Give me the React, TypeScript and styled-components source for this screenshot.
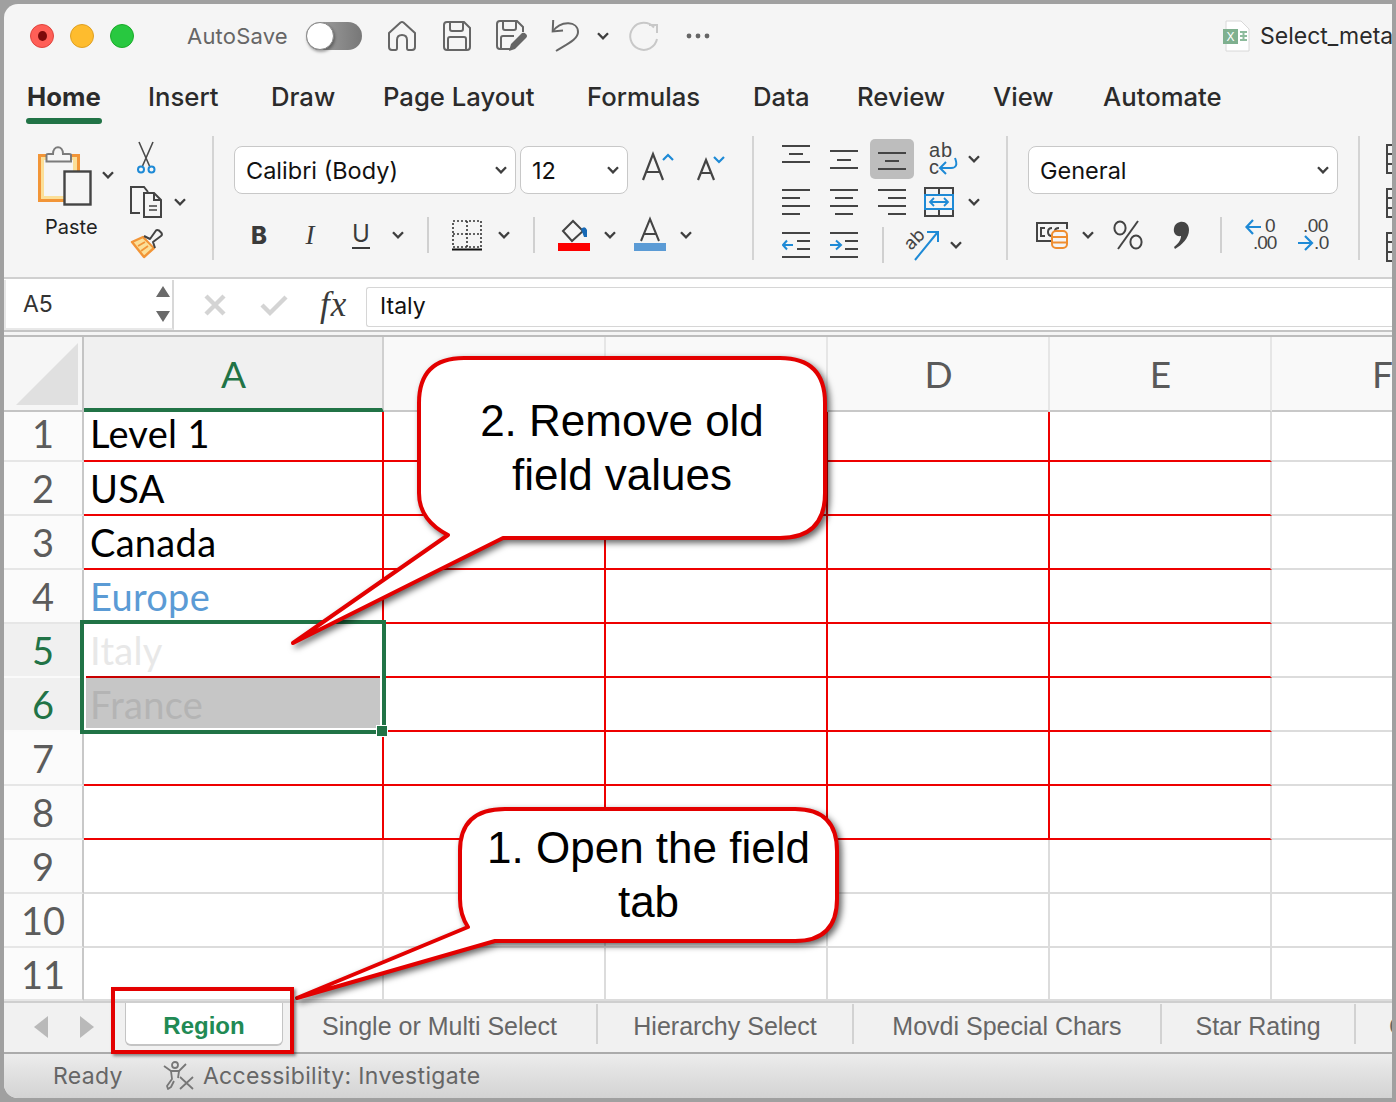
import * as React from 'react';
import styled, { createGlobalStyle } from 'styled-components';

const GREEN = '#217346';
const UI = '"Inter", "Liberation Sans", sans-serif';
const CELL = '"Lato", "Open Sans", sans-serif';

const Global = createGlobalStyle`
  html, body { margin: 0; padding: 0; background: #a0a0a0; }
  * { box-sizing: border-box; }
`;

const S = {
  Page: styled.div`
    position: relative;
    width: 1396px;
    height: 1102px;
    padding: 4px;
    background: #a0a0a0;
    overflow: hidden;
    font-family: ${UI};
  `,
  Win: styled.div`
    width: 1388px;
    height: 1094px;
    background: #f5f5f5;
    border-radius: 14px 0 0 14px;
    overflow: hidden;
    display: flex;
    flex-direction: column;
  `,
  TitleBar: styled.div`
    height: 66px;
    flex: none;
    display: flex;
    align-items: center;
    padding: 0 0 2px 26px;
  `,
  Light: styled.span<{ $c: string; $b: string }>`
    flex: none;
    width: 24px;
    height: 24px;
    margin-right: 16px;
    border-radius: 50%;
    background: ${p => p.$c};
    border: 1px solid ${p => p.$b};
    display: flex;
    align-items: center;
    justify-content: center;
  `,
  LightDot: styled.span`
    width: 9px;
    height: 10px;
    border-radius: 50%;
    background: #7d0a0a;
  `,
  AutoSave: styled.span`
    flex: none;
    margin-left: 37px;
    width: 119px;
    font-size: 22px;
    letter-spacing: 0.2px;
    color: #666;
  `,
  Toggle: styled.span`
    position: relative;
    width: 56px;
    height: 28px;
    border-radius: 14px;
    background: linear-gradient(90deg, #a9a9a9, #777);
    flex: none;
  `,
  Knob: styled.span`
    position: absolute;
    left: 0;
    top: 0;
    width: 28px;
    height: 28px;
    border-radius: 50%;
    background: #fff;
    border: 1px solid #888;
    box-shadow: 1px 2px 3px rgba(0, 0, 0, 0.35);
  `,
  Tool: styled.span<{ $ml?: number; $w: number; $h?: number }>`
    flex: none;
    display: flex;
    align-items: center;
    justify-content: center;
    margin-left: ${p => p.$ml ?? 0}px;
    width: ${p => p.$w}px;
    height: ${p => (p.$h ? `${p.$h}px` : 'auto')};
    svg { display: block; overflow: visible; }
  `,
  DocName: styled.span`
    flex: none;
    margin-left: 10px;
    font-size: 23px;
    color: #2a2a2a;
    white-space: nowrap;
  `,
  TabRow: styled.div`
    height: 55px;
    flex: none;
    display: flex;
    padding-left: 23px;
  `,
  RibbonTab: styled.div<{ $w: number; $on?: boolean }>`
    position: relative;
    flex: none;
    width: ${p => p.$w}px;
    height: 54px;
    line-height: 54px;
    font-size: 25.7px;
    font-weight: ${p => (p.$on ? 700 : 500)};
    color: #2b2b2b;
    white-space: nowrap;
    ${p =>
      p.$on
        ? `&::after {
        content: '';
        position: absolute;
        left: -1px;
        bottom: 0;
        width: 76px;
        height: 6px;
        border-radius: 3px;
        background: ${GREEN};
      }`
        : ''}
  `,
  Ribbon: styled.div`
    height: 154px;
    flex: none;
    display: flex;
    align-items: flex-start;
    padding-top: 11px;
    border-bottom: 2px solid #d0d0d0;
  `,
  Group: styled.div<{ $w: number }>`
    flex: none;
    width: ${p => p.$w}px;
    height: 124px;
    border-right: 2px solid #d4d4d4;
    display: flex;
  `,
  PasteCol: styled.div`
    width: 64px;
    margin-left: 34px;
    padding-top: 10px;
    display: flex;
    flex-direction: column;
  `,
  PasteLabel: styled.span`
    margin: 8px 0 0 7px;
    font-size: 20px;
    line-height: 26px;
    color: #222;
  `,
  ChevronCol: styled.div`
    padding-top: 27px;
  `,
  MiniCol: styled.div`
    margin-left: 16px;
    padding-top: 5px;
    display: flex;
    flex-direction: column;
  `,
  MiniRow: styled.div<{ $h: number }>`
    flex: none;
    height: ${p => p.$h}px;
    display: flex;
    align-items: center;
  `,
  GroupBody: styled.div<{ $pl: number }>`
    padding: 1px 0 0 ${p => p.$pl}px;
    display: flex;
    flex-direction: column;
  `,
  Row: styled.div<{ $h: number }>`
    flex: none;
    height: ${p => p.$h}px;
    display: flex;
    align-items: center;
  `,
  Select: styled.div<{ $w: number; $ml?: number }>`
    flex: none;
    width: ${p => p.$w}px;
    height: 48px;
    margin-left: ${p => p.$ml ?? 0}px;
    padding: 0 8px 0 11px;
    background: #fff;
    border: 1.5px solid #c8c8c8;
    border-radius: 8px;
    display: flex;
    align-items: center;
    justify-content: space-between;
    font-size: 23.5px;
    color: #111;
  `,
  Bold: styled.span<{ $ml?: number; $w: number }>`
    flex: none;
    width: ${p => p.$w}px;
    margin-left: ${p => p.$ml ?? 0}px;
    font-size: 24px;
    font-weight: 800;
    color: #3a3a3a;
    text-align: center;
  `,
  Ital: styled.span<{ $ml: number; $w: number }>`
    flex: none;
    width: ${p => p.$w}px;
    margin-left: ${p => p.$ml}px;
    font-family: "Liberation Serif", serif;
    font-size: 27px;
    font-style: italic;
    color: #3a3a3a;
    text-align: center;
  `,
  Under: styled.span<{ $ml: number; $w: number }>`
    flex: none;
    width: ${p => p.$w}px;
    margin-left: ${p => p.$ml}px;
    font-size: 24px;
    line-height: 26px;
    color: #3a3a3a;
    text-align: center;
    border-bottom: 2px solid #3a3a3a;
  `,
  VSep: styled.span<{ $ml: number; $h: number }>`
    flex: none;
    width: 2px;
    height: ${p => p.$h}px;
    margin-left: ${p => p.$ml}px;
    background: #d0d0d0;
  `,
  Highlight: styled.span`
    flex: none;
    width: 44px;
    height: 40px;
    margin-left: 12px;
    border-radius: 5px;
    background: #bdbdbd;
    display: flex;
    align-items: center;
    justify-content: center;
  `,
  Formula: styled.div`
    height: 53px;
    flex: none;
    display: flex;
    align-items: center;
    background: #fff;
    border-bottom: 2px solid #c4c4c4;
  `,
  NameBox: styled.div`
    flex: none;
    width: 170px;
    height: 50px;
    padding: 0 2px 0 17px;
    background: #fff;
    border: 2px solid #e8e8e8;
    border-top: none;
    border-right: 2px solid #d8d8d8;
    display: flex;
    align-items: center;
    justify-content: space-between;
    font-size: 23px;
    color: #333;
  `,
  Fx: styled.span`
    flex: none;
    margin-left: 32px;
    width: 30px;
    font-family: "Liberation Serif", serif;
    font-style: italic;
    font-size: 35px;
    line-height: 40px;
    letter-spacing: 1px;
    color: #3a3a3a;
  `,
  FormulaInput: styled.div`
    flex: 1;
    height: 40px;
    margin: 4px 0 0 16px;
    padding-left: 13px;
    background: #fff;
    border: 1.5px solid #d6d6d6;
    border-radius: 3px 0 0 3px;
    border-right: none;
    font-size: 23px;
    line-height: 37px;
    color: #111;
  `,
  Grid: styled.div`
    flex: none;
    margin-top: 3px;
    display: grid;
    grid-template-columns: 80px 300px 222px 222px 222px 222px 222px;
    grid-template-rows: 75px 50px repeat(9, 54px) 53px;
    background: #fff;
    border-top: 2px solid #bdbdbd;
  `,
  Corner: styled.div`
    background: #f6f6f6;
    border-right: 2px solid #c4c4c4;
    border-bottom: 2px solid #c4c4c4;
    padding: 6px 4px 4px 12px;
    svg { display: block; }
  `,
  ColHead: styled.div<{ $on?: boolean }>`
    font-family: ${CELL};
    font-size: 37px;
    line-height: 74px;
    padding-left: 1px;
    text-align: center;
    overflow: hidden;
    white-space: nowrap;
    color: ${p => (p.$on ? GREEN : '#5a5a5a')};
    background: ${p => (p.$on ? '#f0f0f0' : '#f9f9f9')};
    border-right: 2px solid ${p => (p.$on ? '#d0d0d0' : '#e6e6e6')};
    border-bottom: ${p => (p.$on ? `4px solid ${GREEN}` : '2px solid #c8c8c8')};
  `,
  RowHead: styled.div<{ $on?: boolean; $first?: boolean }>`
    font-family: ${CELL};
    font-size: 38px;
    text-align: center;
    padding-bottom: ${p => (p.$first ? 7 : 0)}px;
    display: flex;
    align-items: center;
    justify-content: center;
    color: ${p => (p.$on ? GREEN : '#5c5c5c')};
    background: ${p => (p.$on ? '#f0f0f0' : '#fbfbfb')};
    border-right: 2px solid #c8c8c8;
    border-bottom: 2px solid ${p => (p.$on ? '#fafafa' : '#e6e6e6')};
  `,
  Cell: styled.div<{ $line: string; $bottom: string; $bg?: string; $c?: string; $first?: boolean }>`
    font-family: ${CELL};
    font-size: 38px;
    letter-spacing: 0.3px;
    padding: 0 0 ${p => (p.$first ? 7 : 0)}px 6px;
    display: flex;
    align-items: center;
    overflow: hidden;
    white-space: nowrap;
    color: ${p => p.$c ?? '#000'};
    background: ${p => p.$bg ?? '#fff'};
    border-right: 2px solid ${p => p.$line};
    border-bottom: 2px solid ${p => p.$bottom};
  `,
  SheetTabs: styled.div`
    height: 51px;
    flex: none;
    display: flex;
    background: #f1f1f1;
    border-top: 2px solid #cfcfcf;
    font-family: "Liberation Sans", Arial, sans-serif;
  `,
  NavArrow: styled.span<{ $ml: number; $dir: 'l' | 'r' }>`
    flex: none;
    width: 0;
    height: 0;
    margin: 13px 0 0 ${p => p.$ml}px;
    border-top: 11px solid transparent;
    border-bottom: 11px solid transparent;
    ${p => (p.$dir === 'l' ? 'border-right: 14px solid #b9b9b9;' : 'border-left: 14px solid #b9b9b9;')}
  `,
  ActiveTab: styled.div`
    flex: none;
    width: 158px;
    height: 43px;
    margin-left: 31px;
    background: #fff;
    border: 1px solid #c4c4c4;
    border-top: none;
    border-bottom-width: 2px;
    border-radius: 0 0 6px 6px;
    font-size: 24px;
    font-weight: 700;
    line-height: 46px;
    text-align: center;
    color: #218a54;
  `,
  SheetTab: styled.div<{ $w: number }>`
    flex: none;
    width: ${p => p.$w}px;
    height: 40px;
    margin-top: 1px;
    border-right: 2px solid #d2d2d2;
    font-size: 25px;
    line-height: 44px;
    text-align: center;
    white-space: nowrap;
    overflow: hidden;
    color: #666;
  `,
  ClippedTab: styled.div`
    flex: none;
    padding-left: 33px;
    margin-top: 1px;
    font-size: 25px;
    line-height: 44px;
    white-space: nowrap;
    color: #666;
  `,
  Status: styled.div`
    flex: 1;
    display: flex;
    align-items: center;
    padding-left: 49px;
    background: linear-gradient(180deg, #ececec, #d3d3d3);
    border-top: 2px solid #ababab;
    font-size: 23px;
    color: #666;
  `,
  StatusText: styled.span<{ $ml?: number }>`
    margin-left: ${p => p.$ml ?? 0}px;
    letter-spacing: 0.35px;
  `,
  Selection: styled.div`
    position: absolute;
    left: 80px;
    top: 620px;
    width: 306px;
    height: 114px;
    border: 4px solid ${GREEN};
    box-shadow: inset 0 0 0 2px #fff;
    pointer-events: none;
  `,
  Handle: styled.span`
    position: absolute;
    right: -6px;
    bottom: -7px;
    width: 12px;
    height: 12px;
    background: ${GREEN};
    border: 1.5px solid #fff;
  `,
  CalloutBox: styled.div<{ $l: number; $t: number; $w: number; $h: number }>`
    position: absolute;
    left: ${p => p.$l}px;
    top: ${p => p.$t}px;
    width: ${p => p.$w}px;
    height: ${p => p.$h}px;
    svg {
      display: block;
      overflow: visible;
      filter: drop-shadow(3px 3px 3px rgba(0, 0, 0, 0.6));
    }
  `,
  CalloutText: styled.div<{ $l: number; $t: number; $w: number }>`
    position: absolute;
    left: ${p => p.$l}px;
    top: ${p => p.$t}px;
    width: ${p => p.$w}px;
    font-family: "Liberation Sans", Arial, sans-serif;
    font-size: 44px;
    line-height: 54px;
    text-align: center;
    color: #000;
  `,
  RedBox: styled.div`
    position: absolute;
    left: 111px;
    top: 987px;
    width: 183px;
    height: 67px;
    border: 4px solid #e30000;
    box-shadow: 2px 2px 3px rgba(0, 0, 0, 0.45);
    pointer-events: none;
  `
};

const DARK = '#444';
const BLUE = '#1e8ad6';

const Chevron: React.FC<{ c?: string }> = ({ c = '#3f3f3f' }) => (
  <svg width="12" height="8" viewBox="0 0 12 8" fill="none">
    <path d="M1 1.2 L6 6.4 L11 1.2" stroke={c} strokeWidth="2.3" />
  </svg>
);

const Home = () => (
  <svg width="28" height="30" viewBox="0 0 28 30" fill="none" stroke="#666" strokeWidth="2" strokeLinejoin="round">
    <path d="M1 12 L12.5 1.5 Q14 0.5 15.5 1.5 L27 12 V26 Q27 29 24 29 H20.5 Q19 29 19 27 V19 Q19 14 14 14 Q9 14 9 19 V27 Q9 29 7.5 29 H4 Q1 29 1 26 Z" />
  </svg>
);

const Save = () => (
  <svg width="28" height="30" viewBox="0 0 28 30" fill="none" stroke="#666" strokeWidth="2">
    <path d="M4 1 H21 L27 7 V26 Q27 29 24 29 H4 Q1 29 1 26 V4 Q1 1 4 1 Z" />
    <path d="M7 1 V8 Q7 10 9 10 H18 Q20 10 20 8 V1" />
    <path d="M5 29 V18 Q5 16 7 16 H21 Q23 16 23 18 V29" />
  </svg>
);

const SaveEdit = () => (
  <svg width="32" height="32" viewBox="0 0 32 32" fill="none" stroke="#666" strokeWidth="2">
    <path d="M14 29 H4 Q1 29 1 26 V4 Q1 1 4 1 H21 L27 7 V12" />
    <path d="M7 1 V8 Q7 10 9 10 H18 Q20 10 20 8 V1" />
    <path d="M5 29 V18 Q5 16 7 16 H18" />
    <path d="M13 31 L15 24 L26 13 Q28 12 30 14 Q32 16 30 18 L19 29 Z" fill="#666" stroke="none" />
  </svg>
);

const Undo = () => (
  <svg width="28" height="34" viewBox="0 0 28 34" fill="none" stroke="#666" strokeWidth="2">
    <path d="M2.2 1 L1.7 12.5 L12 11.5" />
    <path d="M1.7 12.5 C10 1 27 2 27 13 C27 20 18 24 5 32" />
  </svg>
);

const Redo = () => (
  <svg width="28" height="30" viewBox="0 0 28 30" fill="none" stroke="#c8c8c8" strokeWidth="2">
    <path d="M24 6.5 A13.5 13.5 0 1 0 27 18" />
    <path d="M19 4 H27 V12" />
  </svg>
);

const Dots = () => (
  <svg width="24" height="6" viewBox="0 0 24 6" fill="#666">
    <circle cx="3" cy="3" r="2.4" />
    <circle cx="12" cy="3" r="2.4" />
    <circle cx="21" cy="3" r="2.4" />
  </svg>
);

const ExcelDoc = () => (
  <svg width="27" height="32" viewBox="0 0 27 32">
    <path d="M3 1 H18 L26 9 V31 H3 Z" fill="#fff" stroke="#d8d8d8" />
    <rect x="0" y="9" width="15" height="15" fill="#7fb08f" />
    <text x="3.5" y="21" fontSize="12" fill="#fff" fontFamily="Liberation Sans">X</text>
    <path d="M17 12 H24 M17 16 H24 M17 20 H24 M20.5 11 V21" stroke="#8dbb9c" strokeWidth="2" />
  </svg>
);

const PasteIcon = () => (
  <svg width="54" height="60" viewBox="0 0 54 60" fill="none">
    <rect x="1.5" y="9.5" width="39" height="45" fill="#fbdf98" stroke="#f29537" strokeWidth="3" />
    <rect x="6" y="14" width="29" height="36" fill="#f5f5f5" />
    <path d="M8.5 15.5 V9 Q8.5 8 10 8 H15 C15 -1 25 -1 25 8 H31 Q33 8 33 9 V15.5 Z" fill="#f5f5f5" stroke="#7b7b7b" strokeWidth="2" />
    <rect x="26.5" y="25.5" width="26" height="33" fill="#f5f5f5" stroke="#444" strokeWidth="2.4" />
  </svg>
);

const Cut = () => (
  <svg width="20" height="32" viewBox="0 0 20 32" fill="none">
    <path d="M3 0 L13.5 24 M17 0 L6.5 24" stroke="#4a4a4a" strokeWidth="1.6" />
    <circle cx="5" cy="27.5" r="3" stroke={BLUE} strokeWidth="2" />
    <circle cx="15.5" cy="27.5" r="3" stroke={BLUE} strokeWidth="2" />
  </svg>
);

const Copy = () => (
  <svg width="32" height="32" viewBox="0 0 32 32" fill="none" stroke={DARK} strokeWidth="2">
    <path d="M10 27 H1 V1 H14 L18 6" />
    <path d="M14 7 H24 L31 14 V31 H14 Z" fill="#f5f5f5" />
    <path d="M24 7 V14 H31" />
    <path d="M19 20 H27 M19 24 H27" strokeWidth="1.6" />
  </svg>
);

const Brush = () => (
  <svg width="32" height="30" viewBox="0 0 32 30" fill="none">
    <path d="M1 13 L12 8 L23 19 L13 28 Z" fill="#fbdf98" stroke="#f29537" strokeWidth="2.4" strokeLinejoin="round" />
    <path d="M7 17 L14 13 M10 22 L17 17" stroke="#f29537" strokeWidth="1.8" />
    <path d="M13 7 L19 10 L25 1.5 Q26 0.5 28 1.5 L30.5 4 Q31.5 6 30 7 L22 13 L24 19" stroke={DARK} strokeWidth="2" fill="#f5f5f5" strokeLinejoin="round" />
  </svg>
);

const GrowFont = () => (
  <svg width="32" height="30" viewBox="0 0 32 30" fill="none">
    <path d="M1 25 L11 -1 L21 25 M4.5 17 H17.5" stroke={DARK} strokeWidth="2.2" />
    <path d="M21 5 L26 0 L31 5" stroke={BLUE} strokeWidth="2.2" />
  </svg>
);

const ShrinkFont = () => (
  <svg width="28" height="30" viewBox="0 0 28 30" fill="none">
    <path d="M1 25 L9 5 L17 25 M4 18 H14" stroke={DARK} strokeWidth="2.2" />
    <path d="M17 2 L22 7 L27 2" stroke={BLUE} strokeWidth="2.2" />
  </svg>
);

const Borders = () => (
  <svg width="30" height="31" viewBox="0 0 30 31" fill="none">
    <path d="M1 1 H29 V27 H1 Z M15 1 V27 M1 14 H29" stroke="#333" strokeWidth="1.6" strokeDasharray="2 2" />
    <path d="M0 29.5 H30" stroke="#111" strokeWidth="2" />
  </svg>
);

const FillColor = () => (
  <svg width="32" height="32" viewBox="0 0 32 32" fill="none">
    <path d="M5 12 L15 2 L25 12 L14 22 Z" stroke={DARK} strokeWidth="2" fill="#f5f5f5" />
    <path d="M23 10 Q27 6 29 11 V18 H26 Z" fill="#1769b5" />
    <rect x="0" y="24" width="32" height="8" fill="#fd0000" />
  </svg>
);

const FontColor = () => (
  <svg width="32" height="32" viewBox="0 0 32 32" fill="none">
    <path d="M7 22 L16 0 L25 22 M10 15 H22" stroke={DARK} strokeWidth="2" />
    <rect x="0" y="24" width="32" height="8" fill="#5b9bd5" />
  </svg>
);

const Lines: React.FC<{ rows: [number, number, number][] }> = ({ rows }) => (
  <svg width="28" height="30" viewBox="0 0 28 30" fill="none" stroke={DARK} strokeWidth="2">
    {rows.map((r, i) => (
      <path key={i} d={`M${r[0]} ${r[2]} H${r[1]}`} />
    ))}
  </svg>
);

const WrapText = () => (
  <svg width="30" height="34" viewBox="0 0 30 34" fill="none">
    <text x="0" y="15" fontSize="20" letterSpacing="1" fill={DARK} fontFamily="Liberation Sans">ab</text>
    <text x="0" y="32" fontSize="20" fill={DARK} fontFamily="Liberation Sans">c</text>
    <path d="M26 16 Q30 26 22 26 H12 M17 20 L11 26 L17 32" stroke={BLUE} strokeWidth="2" />
  </svg>
);

const Merge = () => (
  <svg width="30" height="30" viewBox="0 0 30 30" fill="none">
    <path d="M1 1 H29 V29 H1 Z M15 1 V8 M15 22 V29" stroke={DARK} strokeWidth="2" />
    <rect x="1" y="8" width="28" height="14" stroke={BLUE} strokeWidth="2" fill="#f5f5f5" />
    <path d="M6 15 H24 M10 11 L6 15 L10 19 M20 11 L24 15 L20 19" stroke={BLUE} strokeWidth="1.8" />
  </svg>
);

const Indent: React.FC<{ out?: boolean }> = ({ out }) => (
  <svg width="28" height="26" viewBox="0 0 28 26" fill="none">
    <path d="M0 1 H28 M0 25 H28 M15 9 H28 M15 17 H28" stroke={DARK} strokeWidth="2" />
    {out ? (
      <path d="M11 13 H1 M5 8.5 L1 13 L5 17.5" stroke={BLUE} strokeWidth="2" />
    ) : (
      <path d="M0 13 H10 M6 8.5 L11 13 L6 17.5" stroke={BLUE} strokeWidth="2" />
    )}
  </svg>
);

const Orient = () => (
  <svg width="34" height="32" viewBox="0 0 34 32" fill="none">
    <text x="0" y="0" fontSize="18" fill={DARK} fontFamily="Inter" transform="translate(6 22) rotate(-45)">ab</text>
    <path d="M10 31 L32 4 M22 3 H33 V13" stroke={BLUE} strokeWidth="2" />
  </svg>
);

const CondFormat = () => (
  <svg width="32" height="30" viewBox="0 0 32 30" fill="none">
    <path d="M16 21 H1 V3 H31 V9" stroke={DARK} strokeWidth="2" />
    <path d="M9 8 H5 V16 H9 M16 8 Q12 8 12 12 Q12 16 16 16 M23 8 Q19 8 19 11" stroke={DARK} strokeWidth="2" />
    <rect x="16" y="11" width="15" height="17" rx="4" fill="#f5f5f5" stroke="#ef8d2f" strokeWidth="2" />
    <path d="M16 17 H31 M16 22.5 H31" stroke="#ef8d2f" strokeWidth="2" />
  </svg>
);

const Percent = () => (
  <svg width="30" height="30" viewBox="0 0 30 30" fill="none" stroke={DARK} strokeWidth="2">
    <ellipse cx="7" cy="8" rx="5.6" ry="6.5" />
    <ellipse cx="23" cy="22" rx="5.6" ry="6.5" />
    <path d="M5 29 L25 1" />
  </svg>
);

const Comma = () => (
  <svg width="16" height="28" viewBox="0 0 16 28" fill={DARK}>
    <path d="M7 1 C12 0 16 3 16 9 C16 17 9 24 2 28 L1 26 C5 23 8 19 8 15 C3 16 0 12 1 7 C1.5 4 4 1.5 7 1 Z" />
  </svg>
);

const DecInc = () => (
  <svg width="32" height="36" viewBox="0 0 32 36" fill="none">
    <path d="M16 10 H2 M8 3 L1.5 10 L8 17" stroke={BLUE} strokeWidth="2.2" />
    <text x="20" y="15" fontSize="19" fill={DARK} fontFamily="Liberation Sans">0</text>
    <text x="8" y="32" fontSize="19" letterSpacing="-1" fill={DARK} fontFamily="Liberation Sans">.00</text>
  </svg>
);

const DecDec = () => (
  <svg width="32" height="36" viewBox="0 0 32 36" fill="none">
    <text x="6" y="15" fontSize="19" letterSpacing="-0.5" fill={DARK} fontFamily="Liberation Sans">.00</text>
    <path d="M1 26 H15 M8 19 L15 26 L8 33" stroke={BLUE} strokeWidth="2.2" />
    <text x="17" y="32" fontSize="19" letterSpacing="-0.5" fill={DARK} fontFamily="Liberation Sans">.0</text>
  </svg>
);

const PartialCell = () => (
  <svg width="10" height="30" viewBox="0 0 10 30" fill="none" stroke={DARK} strokeWidth="2">
    <path d="M10 1 H1 V29 H10 M1 10 H10 M1 20 H10" />
  </svg>
);

const Stepper = () => (
  <svg width="14" height="36" viewBox="0 0 14 36" fill="#6a6a6a">
    <path d="M7 0 L14 11 H0 Z M0 25 H14 L7 36 Z" />
  </svg>
);

const Cross = () => (
  <svg width="22" height="22" viewBox="0 0 22 22" fill="none" stroke="#d4d4d4" strokeWidth="4.4">
    <path d="M2 2 L20 20 M20 2 L2 20" />
  </svg>
);

const Check = () => (
  <svg width="28" height="22" viewBox="0 0 28 22" fill="none" stroke="#d4d4d4" strokeWidth="4.4">
    <path d="M2 11 L10 19 L26 3" />
  </svg>
);

const Person = () => (
  <svg width="32" height="32" viewBox="0 0 32 32" fill="none" stroke="#777" strokeWidth="1.8" strokeLinejoin="round">
    <circle cx="12" cy="5" r="3" />
    <path d="M1 6 L8 11 H16 L23 4" />
    <path d="M8 11 L9 19 L4 26 L5 29 L8 27 L11 21 M16 11 L15 18" />
    <path d="M17 17 L30 29 M30 17 L17 29" />
  </svg>
);

const tabs: [string, number, boolean?][] = [
  ['Home', 121, true],
  ['Insert', 123],
  ['Draw', 112],
  ['Page Layout', 204],
  ['Formulas', 166],
  ['Data', 104],
  ['Review', 136],
  ['View', 110],
  ['Automate', 140]
];

const COLS = ['A', 'B', 'C', 'D', 'E', 'F'];

const cellText: Record<number, string> = {
  1: 'Level 1',
  2: 'USA',
  3: 'Canada',
  4: 'Europe',
  5: 'Italy',
  6: 'France'
};

const RED = '#ee0000';
const GRAY = '#dcdcdc';

const cellColor = (row: number) => {
  if (row === 4) return '#5b9bd5';
  if (row === 5) return '#e8e8e8';
  if (row === 6) return '#b4b4b4';
  return '#000';
};

const bottomLine = (row: number, c: number) => {
  if (row === 5 && c === 0) return '#c80000';
  return row <= 8 && c < 5 ? RED : GRAY;
};

const SheetCells = () => (
  <>
    {Array.from({ length: 11 }, (_, i) => i + 1).map(row => (
      <React.Fragment key={row}>
        <S.RowHead $on={row === 5 || row === 6} $first={row === 1}>{row}</S.RowHead>
        {COLS.map((col, c) => (
          <S.Cell
            key={col}
            $first={row === 1}
            $line={row <= 8 && c < 4 ? RED : GRAY}
            $bottom={bottomLine(row, c)}
            $bg={row === 6 && c === 0 ? '#c6c6c6' : undefined}
            $c={cellColor(row)}
          >
            {c === 0 ? cellText[row] : ''}
          </S.Cell>
        ))}
      </React.Fragment>
    ))}
  </>
);

const App: React.FC = () => {
  return (
    <S.Page>
      <Global />
      <S.Win>
        <S.TitleBar>
          <S.Light $c="#ff5f57" $b="#e0443e">
            <S.LightDot />
          </S.Light>
          <S.Light $c="#febc2e" $b="#dfa023" />
          <S.Light $c="#28c840" $b="#1aab29" />
          <S.AutoSave>AutoSave</S.AutoSave>
          <S.Toggle>
            <S.Knob />
          </S.Toggle>
          <S.Tool $ml={26} $w={28}><Home /></S.Tool>
          <S.Tool $ml={27} $w={28}><Save /></S.Tool>
          <S.Tool $ml={25} $w={32}><SaveEdit /></S.Tool>
          <S.Tool $ml={23} $w={28}><Undo /></S.Tool>
          <S.Tool $ml={17} $w={14}><Chevron /></S.Tool>
          <S.Tool $ml={20} $w={28}><Redo /></S.Tool>
          <S.Tool $ml={28} $w={24}><Dots /></S.Tool>
          <S.Tool $ml={513} $w={27}><ExcelDoc /></S.Tool>
          <S.DocName>Select_metadata</S.DocName>
        </S.TitleBar>

        <S.TabRow>
          {tabs.map(([name, w, on]) => (
            <S.RibbonTab key={name} $w={w} $on={on}>{name}</S.RibbonTab>
          ))}
        </S.TabRow>

        <S.Ribbon>
          <S.Group $w={210}>
            <S.PasteCol>
              <PasteIcon />
              <S.PasteLabel>Paste</S.PasteLabel>
            </S.PasteCol>
            <S.ChevronCol><Chevron /></S.ChevronCol>
            <S.MiniCol>
              <S.MiniRow $h={34}>
                <S.Tool $ml={6} $w={20}><Cut /></S.Tool>
              </S.MiniRow>
              <S.MiniRow $h={54}>
                <S.Tool $w={32}><Copy /></S.Tool>
                <S.Tool $ml={12} $w={12}><Chevron /></S.Tool>
              </S.MiniRow>
              <S.MiniRow $h={30}>
                <S.Tool $ml={1} $w={32}><Brush /></S.Tool>
              </S.MiniRow>
            </S.MiniCol>
          </S.Group>

          <S.Group $w={540}>
            <S.GroupBody $pl={20}>
              <S.Row $h={66}>
                <S.Select $w={282}>Calibri (Body)<Chevron /></S.Select>
                <S.Select $w={108} $ml={4}>12<Chevron /></S.Select>
                <S.Tool $ml={14} $w={32}><GrowFont /></S.Tool>
                <S.Tool $ml={23} $w={28}><ShrinkFont /></S.Tool>
              </S.Row>
              <S.Row $h={64}>
                <S.Bold $ml={17} $w={15}>B</S.Bold>
                <S.Ital $ml={37} $w={14}>I</S.Ital>
                <S.Under $ml={35} $w={18}>U</S.Under>
                <S.Tool $ml={22} $w={12}><Chevron /></S.Tool>
                <S.VSep $ml={23} $h={36} />
                <S.Tool $ml={23} $w={30}><Borders /></S.Tool>
                <S.Tool $ml={16} $w={12}><Chevron /></S.Tool>
                <S.VSep $ml={23} $h={36} />
                <S.Tool $ml={23} $w={32}><FillColor /></S.Tool>
                <S.Tool $ml={14} $w={12}><Chevron /></S.Tool>
                <S.Tool $ml={18} $w={32}><FontColor /></S.Tool>
                <S.Tool $ml={14} $w={12}><Chevron /></S.Tool>
              </S.Row>
            </S.GroupBody>
          </S.Group>

          <S.Group $w={254}>
            <S.GroupBody $pl={28}>
              <S.Row $h={43}>
                <Lines rows={[[0, 28, 2], [7, 21, 10], [0, 28, 18]]} />
                <S.Tool $ml={20} $w={28}><Lines rows={[[0, 28, 7], [7, 21, 16], [0, 28, 24]]} /></S.Tool>
                <S.Highlight><Lines rows={[[0, 28, 9], [7, 21, 17], [0, 28, 25]]} /></S.Highlight>
                <S.Tool $ml={15} $w={30}><WrapText /></S.Tool>
                <S.Tool $ml={9} $w={12}><Chevron /></S.Tool>
              </S.Row>
              <S.Row $h={44}>
                <Lines rows={[[0, 28, 3], [0, 18, 11], [0, 28, 19], [0, 18, 27]]} />
                <S.Tool $ml={20} $w={28}><Lines rows={[[0, 28, 3], [5, 23, 11], [0, 28, 19], [5, 23, 27]]} /></S.Tool>
                <S.Tool $ml={20} $w={28}><Lines rows={[[0, 28, 3], [10, 28, 11], [0, 28, 19], [10, 28, 27]]} /></S.Tool>
                <S.Tool $ml={18} $w={30}><Merge /></S.Tool>
                <S.Tool $ml={14} $w={12}><Chevron /></S.Tool>
              </S.Row>
              <S.Row $h={42}>
                <Indent out />
                <S.Tool $ml={20} $w={28}><Indent /></S.Tool>
                <S.VSep $ml={24} $h={36} />
                <S.Tool $ml={21} $w={34}><Orient /></S.Tool>
                <S.Tool $ml={11} $w={12}><Chevron /></S.Tool>
              </S.Row>
            </S.GroupBody>
          </S.Group>

          <S.Group $w={352}>
            <S.GroupBody $pl={20}>
              <S.Row $h={66}>
                <S.Select $w={310}>General<Chevron /></S.Select>
              </S.Row>
              <S.Row $h={64}>
                <S.Tool $ml={8} $w={32}><CondFormat /></S.Tool>
                <S.Tool $ml={14} $w={12}><Chevron /></S.Tool>
                <S.Tool $ml={19} $w={30}><Percent /></S.Tool>
                <S.Tool $ml={30} $w={16}><Comma /></S.Tool>
                <S.VSep $ml={31} $h={36} />
                <S.Tool $ml={23} $w={32}><DecInc /></S.Tool>
                <S.Tool $ml={20} $w={32}><DecDec /></S.Tool>
              </S.Row>
            </S.GroupBody>
          </S.Group>

          <S.GroupBody $pl={26}>
            <S.Row $h={44}><PartialCell /></S.Row>
            <S.Row $h={44}><PartialCell /></S.Row>
            <S.Row $h={44}><PartialCell /></S.Row>
          </S.GroupBody>
        </S.Ribbon>

        <S.Formula>
          <S.NameBox>
            A5
            <Stepper />
          </S.NameBox>
          <S.Tool $ml={30} $w={22}><Cross /></S.Tool>
          <S.Tool $ml={34} $w={28}><Check /></S.Tool>
          <S.Fx>fx</S.Fx>
          <S.FormulaInput>Italy</S.FormulaInput>
        </S.Formula>

        <S.Grid>
          <S.Corner>
            <svg width="62" height="62" viewBox="0 0 62 62" fill="#e0e0e0">
              <path d="M62 0 V62 H0 Z" />
            </svg>
          </S.Corner>
          {COLS.map((c, i) => (
            <S.ColHead key={c} $on={i === 0}>{c}</S.ColHead>
          ))}
          <SheetCells />
        </S.Grid>

        <S.SheetTabs>
          <S.NavArrow $ml={30} $dir="l" />
          <S.NavArrow $ml={32} $dir="r" />
          <S.ActiveTab>Region</S.ActiveTab>
          <S.SheetTab $w={315}>Single or Multi Select</S.SheetTab>
          <S.SheetTab $w={256}>Hierarchy Select</S.SheetTab>
          <S.SheetTab $w={308}>Movdi Special Chars</S.SheetTab>
          <S.SheetTab $w={194}>Star Rating</S.SheetTab>
          <S.ClippedTab>Cascading</S.ClippedTab>
        </S.SheetTabs>

        <S.Status>
          <S.StatusText>Ready</S.StatusText>
          <S.Tool $ml={40} $w={32}><Person /></S.Tool>
          <S.StatusText $ml={8}>Accessibility: Investigate</S.StatusText>
        </S.Status>
      </S.Win>

      <S.Selection>
        <S.Handle />
      </S.Selection>

      <S.CalloutBox $l={293} $t={358} $w={532} $h={285}>
        <svg width="532" height="285" viewBox="293 358 532 285">
          <path
            d="M464 358 H780 Q825 358 825 403 V493 Q825 538 780 538 H503 L293 643 L448 535 Q419 520 419 493 V403 Q419 358 464 358 Z"
            fill="#fff"
            stroke="#e30000"
            strokeWidth="4"
            strokeLinejoin="round"
          />
        </svg>
        <S.CalloutText $l={126} $t={36} $w={406}>2. Remove old<br />field values</S.CalloutText>
      </S.CalloutBox>

      <S.CalloutBox $l={297} $t={809} $w={540} $h={189}>
        <svg width="540" height="189" viewBox="297 809 540 189">
          <path
            d="M505 809 H795 Q837 809 837 851 V899 Q837 941 795 941 H495 L297 998 L468 927 Q460 915 460 899 V851 Q460 809 505 809 Z"
            fill="#fff"
            stroke="#e30000"
            strokeWidth="4"
            strokeLinejoin="round"
          />
        </svg>
        <S.CalloutText $l={163} $t={12} $w={377}>1. Open the field<br />tab</S.CalloutText>
      </S.CalloutBox>

      <S.RedBox />
    </S.Page>
  );
};

export default App;
